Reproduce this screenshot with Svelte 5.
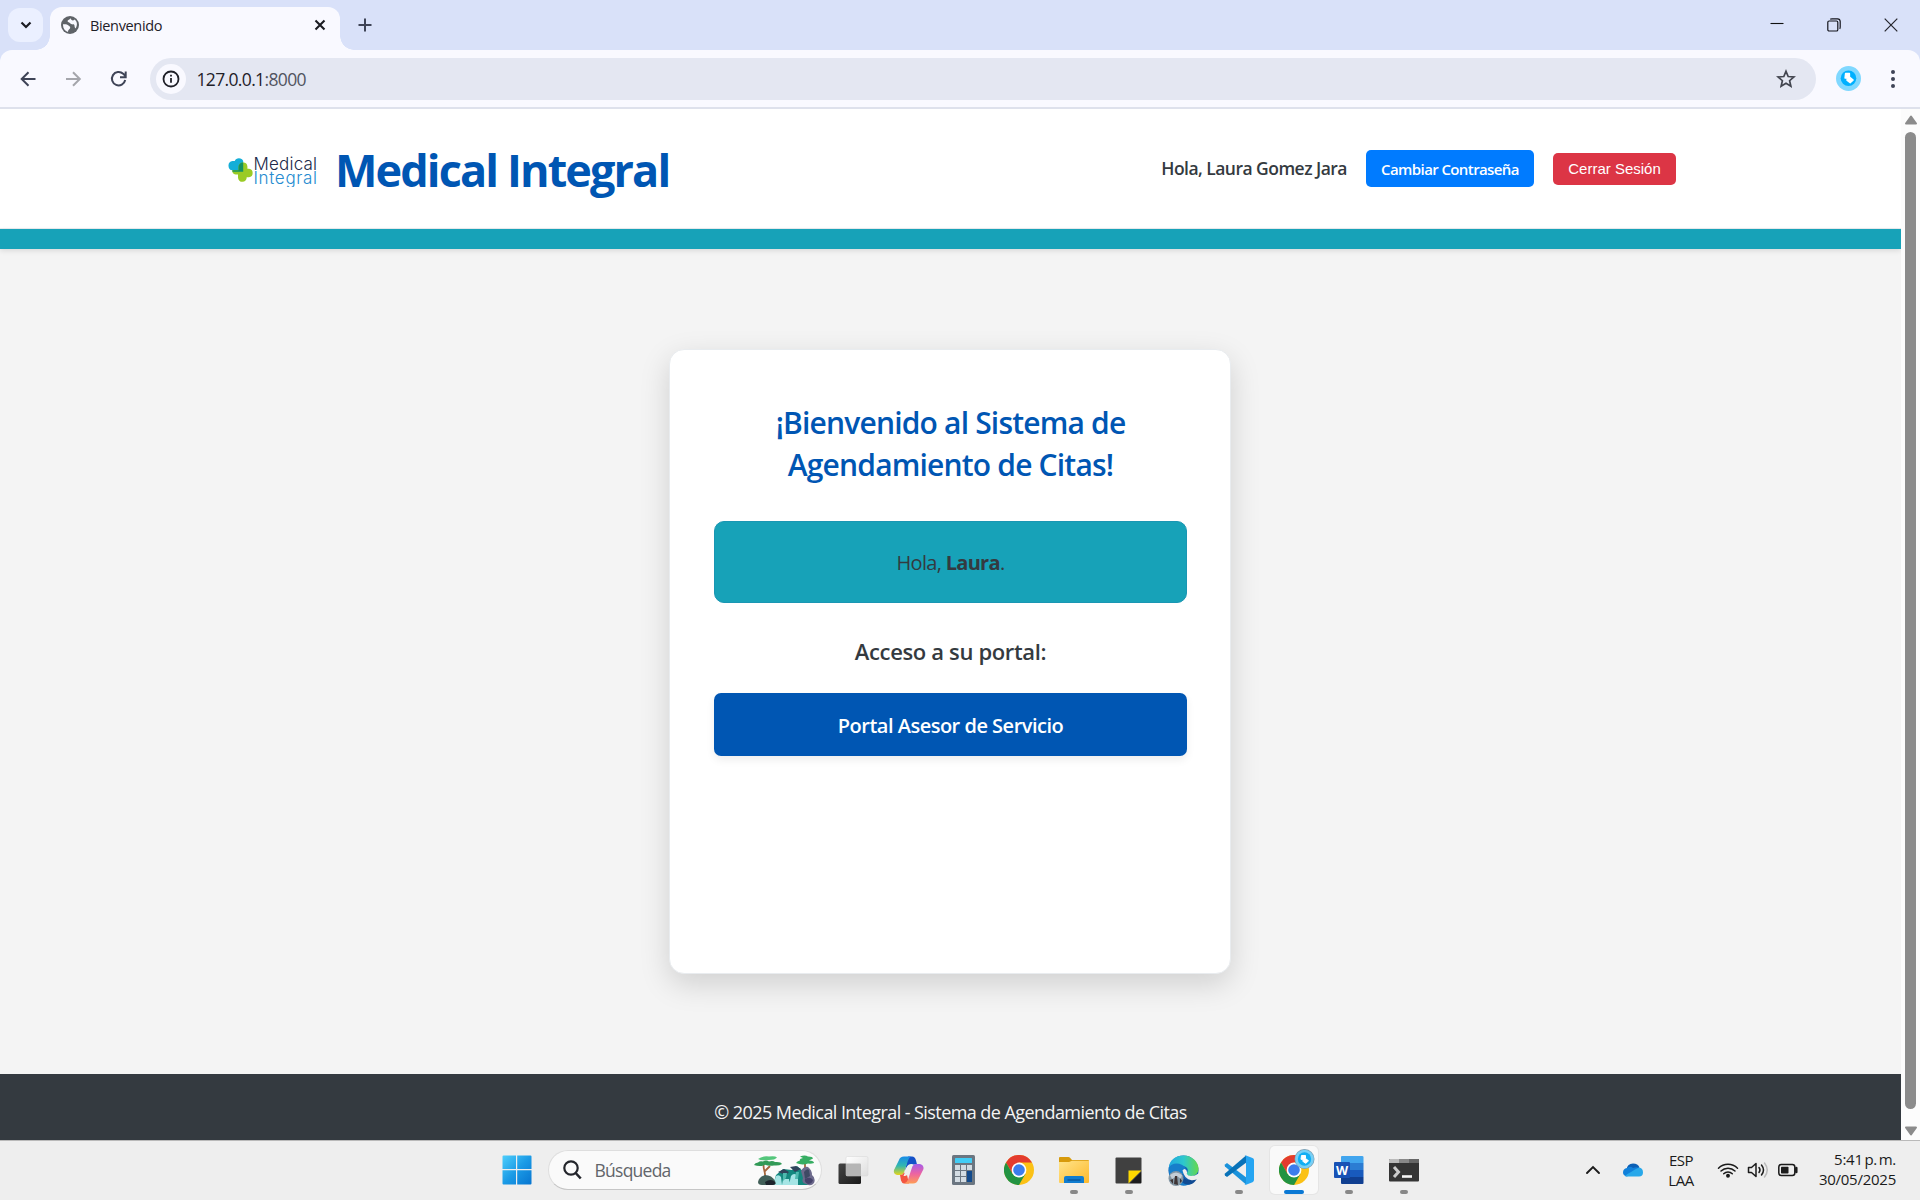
<script>
  const year = 2025;
  const user = { first: 'Laura', full: 'Laura Gomez Jara' };
</script>

{#snippet chrome()}
  <circle cx="15" cy="15" r="15" fill="#fbc116" />
  <path d="M2 7.5A15 15 0 0 1 28 7.5H15L8.5 18.7Z" fill="#e33b2e" />
  <path d="M2 7.5A15 15 0 0 0 15 30L21.5 18.7H8.5Z" fill="#229342" />
  <circle cx="15" cy="15" r="7.4" fill="#fff" />
  <circle cx="15" cy="15" r="5.8" fill="#3b7ded" />
{/snippet}

<div class="screen">
  <div class="tabs">
    <button class="tabsearch" aria-label="Buscar pestañas">
      <svg width="12" height="8" viewBox="0 0 12 8"><path d="M1.500 1.500 6 6l4.500-4.500" fill="none" stroke="#1b1c22" stroke-width="2.200" /></svg>
    </button>
    <div class="tab">
      <svg width="18" height="18" viewBox="0 0 18 18">
        <circle cx="9" cy="9" r="9" fill="#5f6368" />
        <path d="M2 8.200C5 8 6.500 8.500 7.500 9.500 9 10.500 9.500 11 9 12.500 8.500 13.500 7 13.500 7 16 4 15 2 12.500 2 9ZM9.500 2.200C8.500 4 7 3.500 6.500 5 6.500 6.500 8.500 6 9.500 7.500 10.500 9 12 8 13 8.500 14 9.200 13 11 14.500 12.500 17 9 16 5 13.500 3.500 12 5.500 10 4 9.500 2.200Z" fill="#f9f9ff" />
      </svg>
      <span class="tabname">Bienvenido</span>
      <svg width="12" height="12" viewBox="0 0 12 12"><path d="m1.500 1.500 9 9m0-9-9 9" stroke="#1b1c22" stroke-width="2.100" /></svg>
    </div>
    <svg class="plus" width="14" height="14" viewBox="0 0 14 14"><path d="M7 .5v13M.5 7h13" stroke="#3f4457" stroke-width="2" /></svg>
    <div class="winbtns">
      <svg width="14" height="14" viewBox="0 0 14 14"><path d="M.5 5.500h13" stroke="#111" stroke-width="1.100" /></svg>
      <svg width="14" height="14" viewBox="0 0 14 14" fill="none" stroke="#15151c" stroke-width="1.200"><rect x=".8" y="3" width="10" height="10" rx="1.300" /><path d="M3.200 1.200C3.800.8 4 .8 5 .8h5.500a2.800 2.800 0 0 1 2.700 2.700V9c0 1 0 1.200-.5 1.800" /></svg>
      <svg width="14" height="14" viewBox="0 0 14 14"><path d="m.7.7 12.600 12.600m0-12.600L.7 13.300" stroke="#24242c" stroke-width="1.200" /></svg>
    </div>
  </div>

  <div class="toolbar-back">
    <div class="toolbar">
      <svg class="nav" width="44" height="20" viewBox="0 0 44 20"><path d="M29.500 10H16.500M22.500 3.200 15.700 10l6.800 6.800" fill="none" stroke="#3f4457" stroke-width="2" /></svg>
      <svg class="nav" width="44" height="20" viewBox="0 0 44 20"><path d="M15 10h13M22 3.200 28.800 10 22 16.800" fill="none" stroke="#a5a6ac" stroke-width="2" /></svg>
      <svg class="nav" width="44" height="20" viewBox="0 0 44 20"><path d="M29.200 11A6.700 6.700 0 1 1 27.200 4.800L29.500 7M29.700 2.500v5.700h-5.700" fill="none" stroke="#3f4457" stroke-width="2" /></svg>
      <div class="omnibox">
        <span class="info">
          <svg width="18" height="18" viewBox="0 0 18 18"><circle cx="9" cy="9" r="7.500" fill="none" stroke="#1f2028" stroke-width="1.800" /><path d="M9 8v4.800M9 4.800v1.800" stroke="#1f2028" stroke-width="1.800" /></svg>
        </span>
        <span class="url">127.0.0.1<span>:8000</span></span>
        <svg class="star" width="20" height="20" viewBox="0 0 20 20"><path d="m10 2.300 2.200 5.200 5.700.5-4.300 3.700 1.300 5.600-4.900-3-4.900 3 1.300-5.600L2.100 8l5.700-.5Z" fill="none" stroke="#42454f" stroke-width="1.700" /></svg>
      </div>
      <svg class="profile" width="25" height="25" viewBox="0 0 25 25">
        <circle cx="12.500" cy="12.500" r="12.500" fill="#80d8ff" /><circle cx="12.500" cy="12.200" r="7.800" fill="#00b0ff" />
        <path d="M9.500 7.500h4v3.500l3.700 3-3 2.800-3.300-2.600.4-2.200H9Z" fill="#fff" stroke="#fff" stroke-width="1.300" stroke-linejoin="round" />
      </svg>
      <svg class="dots" width="6" height="20" viewBox="0 0 6 20" fill="#3f4457"><circle cx="3" cy="3" r="2" /><circle cx="3" cy="10" r="2" /><circle cx="3" cy="17" r="2" /></svg>
    </div>
  </div>

  <div class="viewport">
    <div class="page">
      <header>
        <div class="brand">
          <svg class="logo" width="90" height="34" viewBox="0 0 90 34">
            <path d="M4.500 17.300A4.700 4.700 0 0 1 4.500 8h2.200A4.600 4.600 0 0 1 15.200 8v9.300Z" fill="#14aed8" />
            <path d="M15 9.500a4.300 4.300 0 0 1 4.400 4v2.300h1.600a4.300 4.300 0 0 1 0 8.500h-2.300a4.300 4.300 0 0 1-8.700.3v-3H7.500a4.300 4.300 0 0 1-3.300-4.500h6.300V14A4.300 4.300 0 0 1 15 9.500Z" fill="#9acb25" />
            <path d="M15.200 9.500v9.300H4.500v-1.500h6V14a4.300 4.300 0 0 1 4.700-4.500Z" fill="#149261" />
            <text x="25.500" y="17" textLength="63.500" fill="#20294a" font-size="17">Medical</text>
            <text x="25.500" y="31.300" textLength="63.500" fill="#258bd0" font-size="17">Integral</text>
          </svg>
          <h1>Medical Integral</h1>
        </div>
        <div class="account">
          <span class="greet">Hola, {user.full}</span>
          <button class="change">Cambiar Contraseña</button>
          <button class="logout">Cerrar Sesión</button>
        </div>
      </header>
      <div class="strip"></div>
      <main>
        <section class="card">
          <h2>¡Bienvenido al Sistema de<br /><span>Agendamiento de Citas!</span></h2>
          <p class="hello">Hola, <b>{user.first}</b>.</p>
          <h3>Acceso a su portal:</h3>
          <button class="portal">Portal Asesor de Servicio</button>
        </section>
      </main>
      <footer>© {year} Medical Integral - Sistema de Agendamiento de Citas</footer>
    </div>
    <div class="scroll">
      <svg width="14" height="10" viewBox="0 0 14 10"><path d="M7 1.500 12 8.500H2Z" fill="#8b8b8b" stroke="#8b8b8b" stroke-width="2" stroke-linejoin="round" /></svg>
      <div class="thumb"></div>
      <svg width="14" height="10" viewBox="0 0 14 10"><path d="M7 8.500 12 1.500H2Z" fill="#8b8b8b" stroke="#8b8b8b" stroke-width="2" stroke-linejoin="round" /></svg>
    </div>
  </div>

  <div class="taskbar">
    <div class="app">
      <svg width="30" height="30" viewBox="0 0 30 30">
        <defs><linearGradient id="win" x1="0" y1="0" x2="30" y2="30" gradientUnits="userSpaceOnUse"><stop stop-color="#50d0fc" /><stop offset=".5" stop-color="#1b9be6" /><stop offset="1" stop-color="#0673cf" /></linearGradient></defs>
        <path d="M1.500.5H14V14H.5V1.500q0-1 1-1ZM15.200.5h13.300q1 0 1 1V14H15.200ZM.5 15.200H14v14.300H1.500q-1 0-1-1ZM15.200 15.200h14.300v13.300q0 1-1 1H15.200Z" fill="url(#win)" />
      </svg>
    </div>
    <div class="search">
      <svg width="19" height="20" viewBox="0 0 19 20" fill="none" stroke="#23252b"><circle cx="8" cy="8" r="6.700" stroke-width="2.200" /><path d="m12.700 13 5 5.500" stroke-width="2.600" /></svg>
      <span>Búsqueda</span>
      <svg class="art" width="61" height="31" viewBox="0 0 61 31">
        <path d="M11 22C12 17 8 13 10 7M10 17l6-6M51 14V6" stroke="#a5663c" stroke-width="1.800" fill="none" />
        <path d="M0 10q1-2.500 4-2.500Q6 5.500 9 6.500q3-2 6 0 4-1 6 .5 6-.5 7 2-3 2-8 1.500-5 1-9-.7-5 2.500-11 .2Z" fill="#329a57" />
        <path d="M4 4q5-3.500 11-2.500 6-1 8 1-2 2.500-8 2.500Q7 6 4 4Z" fill="#54c67b" />
        <path d="M42 8q1-2 4-2.500-1-2 3-2.500l-3-1.500q5-2 8 0 5 0 5 2l-4 2q5 0 5 2.500-3 1-6 .5-6 2-12-.5Z" fill="#36ad62" />
        <path d="M22 20 29 14 38 15 43 11 50 17 54 30H19Z" fill="#14887f" />
        <path d="m24 17 6-3 5 3-3 3Zm12-5 6-1 5 3-6 3Z" fill="#30445b" />
        <path d="M22 21q3-2 5 1l1 8h-9Zm15 0q3-4 7 0v9h-9ZM29 24h6l1 6h-8Z" fill="#a5e5e5" />
        <path d="M29 18h4l-1 5-3 3Zm13-1h3l-1 7h-3Z" fill="#4fb9ae" />
        <path d="M4 27q1-5 7-7 7 0 10 6 2 4-2 4H8q-4 0-4-3Z" fill="#415f58" /><path d="M11 27q6-4 10 0 1 3-3 3h-6Z" fill="#1d252d" />
        <path d="M47 16q3-5 7-4 4 3 4 8 4 3 2 8-3 4-8 1-5-1-3-6Z" fill="#6d6a8c" /><path d="M50 17q3-4 5-2l1 6-5 3Z" fill="#3e4a64" /><path d="M51 24q5-3 8 1-1 4-5 4-4-2-3-5Z" fill="#45426a" />
      </svg>
    </div>

    <div class="apps">
      <div class="app">
        <svg width="31" height="30" viewBox="0 0 31 30">
          <defs><linearGradient id="tv" x2="1" y2="1"><stop stop-color="#444" /><stop offset="1" stop-color="#1a1a1a" /></linearGradient><linearGradient id="tw" x2="1" y2="1"><stop stop-color="#fff" /><stop offset="1" stop-color="#ddd" /></linearGradient></defs>
          <rect x=".5" y="8.500" width="22.500" height="20.500" rx="1.500" fill="url(#tv)" /><rect x="8" y="1.500" width="22" height="19.500" rx="1.500" fill="url(#tw)" stroke="#d5d5d5" stroke-width=".5" /><path d="M8 8.500h14q1 0 1 1V21H8Z" fill="#b5b5b5" />
        </svg>
      </div>
      <div class="app">
        <svg width="31" height="30" viewBox="0 0 31 30">
          <defs><linearGradient id="ca" x1="0" y1="0" x2="0" y2="1"><stop stop-color="#178be9" /><stop offset=".5" stop-color="#31b7b0" /><stop offset="1" stop-color="#e7d51a" /></linearGradient><linearGradient id="cb" x1="0" y1="0" x2="0" y2="1"><stop stop-color="#a65ce9" /><stop offset=".5" stop-color="#ed64a1" /><stop offset="1" stop-color="#ff9c55" /></linearGradient></defs>
          <path d="M15 1.500h4q3 0 4 4l1 4h-6q-4 0-6 6Z" fill="#1450c8" />
          <path d="M6 5q1-3.500 5-3.500h7q-2 1-3 4l-4 12q-1 2.500-4 2.500H4q-4-1-3-5Z" fill="url(#ca)" />
          <path d="M16 28.500h-5q-2 0-3-3L7 20q3 0 4-2.500l3 2.500Z" fill="#f35540" />
          <path d="M25.500 24q-1.500 4.500-5.500 4.500h-9q3-1 4-4l4-12q1-3.500 4-3.500h4q4 1 3.500 5Z" fill="url(#cb)" />
          <path d="M14 12q1-3 4.500-3h1.500q-1 1-1.500 3L16 18q-1 2.500-4 3h-1.500Z" fill="#eee" />
        </svg>
      </div>
      <div class="app">
        <svg width="23" height="30" viewBox="0 0 23 30"><rect width="23" height="30" rx="1.500" fill="#6b7681" /><rect x="3" y="3" width="17" height="5" rx=".5" fill="#42cdf6" /><path d="M3 10h5v5H3Zm6 0h5v5H9Zm6 0h5v5h-5ZM3 16h5v5H3Zm6 0h5v5H9ZM3 22h5v5H3Zm6 0h5v5H9Z" fill="#d3dce3" /><path d="M15 16h5v11h-5Z" fill="#124a8c" /></svg>
      </div>
      <div class="app"><svg width="30" height="30" viewBox="0 0 30 30">{@render chrome()}</svg></div>
      <div class="app run">
        <svg width="30" height="28" viewBox="0 0 30 28">
          <defs><linearGradient id="fo" x2="1" y2="1"><stop stop-color="#ffe48a" /><stop offset="1" stop-color="#fdb92c" /></linearGradient></defs>
          <path d="M0 2q0-1 1-1h8.500q1 0 1.500.7L13 4h16q1 0 1 1v5H0Z" fill="#d79a0b" /><path d="M0 6h10l3-1.200h17V26q0 1-1 1H1q-1 0-1-1Z" fill="url(#fo)" /><path d="M5 22q0-2 2-2h16q2 0 2 2v5H5Z" fill="#117dd0" /><path d="M8.500 24h13" stroke="#08549a" stroke-width="1.300" />
        </svg>
      </div>
      <div class="app run"><svg width="27" height="27" viewBox="0 0 27 27"><path d="M1.500.5h24q1 0 1 1V14L14 26.500H1.500q-1 0-1-1v-24q0-1 1-1Z" fill="#404040" /><path d="M13.500 13.500h13L13.500 26.500Z" fill="#fed900" /><path d="M26.500 14v11.500q0 1-1 1H14Z" fill="#1d1d1d" /></svg></div>
      <div class="app">
        <svg width="31" height="31" viewBox="0 0 31 31">
          <defs><linearGradient id="ed" x2="1"><stop stop-color="#22a8df" /><stop offset=".5" stop-color="#2dc7cd" /><stop offset="1" stop-color="#65d94b" /></linearGradient></defs>
          <circle cx="15.500" cy="15.500" r="15" fill="#1264b5" /><path d="M.8 13C1 5 8 .5 15.500.5 24 .5 30.500 7 30.500 13.500c0 5-3.500 7.500-7.500 7.500-4 0-5-1.500-4-3 2-3 .5-7-5-7C9 9 3 9 .8 13Z" fill="url(#ed)" /><path d="M.8 13C3 7 14 7 17.500 13c1 2-1 3.500-2 5.500-1 4 3 7 7 7q4 0 6-2.500C26 28 21 30.500 16 30.500 8 30.500 0 24 .8 13Z" fill="#177ecb" /><path d="M14.500 19C15 24 21 27 28 23c1 1 .5 2-1.500 4-5 5-13 2-14-3-.5-3 1-5 2-5Z" fill="#104b93" /><path d="M14.500 15.500q2-3 4 0 1 2 .3 3.500 1 2 4.200 2 4 0 7.500-2.500V23q-3 2.500-7 2.200-7-.7-9-9.700Z" fill="#eee" />
          <circle cx="8" cy="23.500" r="7.500" fill="#8396a3" /><path d="M2 20q6-5 12 0l-1 4-4-3-5 3Z" fill="#c3ced7" /><path d="M6 29l1-8h2l1 9ZM2 25l3-1v5Zm10-2 2 3-2 2Z" fill="#3e3434" />
        </svg>
      </div>
      <div class="app run">
        <svg width="30" height="30" viewBox="0 0 30 30"><path d="M1 9.500 3 8l20 15-1 6.500L1 11.500q-.8-1 0-2Z" fill="#1a92db" /><path d="M1 20.500 3 22 23 7l-1-6.500L1 18.500q-.8 1 0 2Z" fill="#0872b8" /><path d="M22 .5 28.500 3q1.500.7 1.500 2v20q0 1.500-1.500 2.200L22 29.800q-1 .2-2-.7 2 .7 2-1.500V2.500Q22 0 20 1q1-.8 2-.5Z" fill="#25a5f2" /></svg>
      </div>
      <div class="app run active">
        <svg width="36" height="36" viewBox="0 0 36 36"><g transform="translate(0 6)">{@render chrome()}</g><circle cx="25.500" cy="10" r="10" fill="#7b9cb0" /><circle cx="25.500" cy="10" r="9.300" fill="#78d0f6" /><circle cx="25.500" cy="10" r="6.700" fill="#12aff4" /><path d="M22.500 6.500h4v3l3 2.300-2.700 2.500-3-2 .4-2h-2.200Z" fill="#fff" stroke="#fff" stroke-linejoin="round" /></svg>
      </div>
      <div class="app run">
        <svg width="30" height="28" viewBox="0 0 30 28"><path d="M8 0h20q1.500 0 1.500 1v6H7V1q0-1 1-1Z" fill="#41a5ee" /><path d="M7 7h22.500v7H7Z" fill="#2b7cd3" /><path d="M7 14h22.500v7H7Z" fill="#185abd" /><path d="M7 21h22.500v6q0 1-1 1H8q-1 0-1-1Z" fill="#103f91" /><rect x="0" y="6" width="16" height="16" rx="1" fill="#1852b5" /><text class="wlet" x="8" y="18.500" text-anchor="middle" fill="#fff" font-size="12.500">W</text></svg>
      </div>
      <div class="app run">
        <svg width="30" height="23" viewBox="0 0 30 23"><rect width="30" height="22.500" rx="1" fill="#353535" /><path d="M1 0h9v4H0V1q0-1 1-1Z" fill="#bbb" /><path d="M10 0h10v4H10Z" fill="#888" /><path d="M20 0h9q1 0 1 1v3H20Z" fill="#666" /><path d="m5 8 4.500 5L5 18" fill="none" stroke="#ccc" stroke-width="3" /><path d="M13 17.500h10" stroke="#f5f5f5" stroke-width="2.600" /></svg>
      </div>
    </div>

    <div class="tray">
      <svg class="cell" width="40" height="20" viewBox="0 0 40 20"><path d="m14 13 6-6 6 6" fill="none" stroke="#1b1b1b" stroke-width="1.900" stroke-linecap="round" /></svg>
      <svg class="cell" width="40" height="20" viewBox="0 0 40 20"><path d="M13.500 10Q14 3.500 20 3.500q5 0 6.500 4L20 11Z" fill="#0b5fb5" /><path d="M14 8q-4 .5-4 4.500 0 3 4 4L27 9q-2-3-7-1-3-2.500-6 0Z" fill="#1180da" /><path d="M12 16q2-2 6-4 4-3 8-4.500 4 .5 4 5 0 4-4 4H14q-1 0-2-.5Z" fill="#28a8ea" /></svg>
      <div class="lang"><span>ESP</span><span>LAA</span></div>
      <svg class="cell" width="30" height="20" viewBox="0 0 30 20" fill="none" stroke="#1b1b1b" stroke-width="1.500"><path d="M5.500 8.200a13.500 13.500 0 0 1 19 0M8 11a10 10 0 0 1 14 0M10.700 13.700a6.200 6.200 0 0 1 8.600 0" stroke-linecap="round" /><circle cx="15" cy="15.700" r="1.200" fill="#1b1b1b" /></svg>
      <svg class="cell" width="30" height="20" viewBox="0 0 30 20" fill="none" stroke="#1b1b1b" stroke-width="1.500" stroke-linecap="round" stroke-linejoin="round"><path d="M5.500 7.500h3l4.500-4v13l-4.500-4h-3ZM16 7.500q2 2.500 0 5M18.500 5q4 5 0 10" /><path d="M21.500 3q5.500 7 0 14" stroke="#bbb" /></svg>
      <svg class="cell" width="30" height="20" viewBox="0 0 30 20"><rect x="5.800" y="4.500" width="16" height="11" rx="2.500" fill="none" stroke="#1b1b1b" stroke-width="1.500" /><rect x="8" y="6.700" width="7.500" height="6.800" rx=".7" fill="#1b1b1b" /><path d="M23.300 8v4" stroke="#1b1b1b" stroke-width="2.500" stroke-linecap="round" /></svg>
      <div class="clock"><span class="time">5:41 p. m.</span><span>30/05/2025</span></div>
    </div>
  </div>
</div>

<style>
  :global(body) { margin: 0; overflow: hidden; }
  .screen { width: 1920px; height: 1200px; display: flex; flex-direction: column; font-family: "Open Sans", "Noto Sans", sans-serif; background: #fff; }
  button { border: 0; padding: 0; font-family: inherit; }
  svg { flex: none; display: block; }
  h1, h2, h3, p { margin: 0; }
  span, h1, h3, button, footer { white-space: nowrap; }

  .tabs { height: 50px; background: #d9e1f9; display: flex; align-items: center; padding: 0 22px 0 8px; box-sizing: border-box; }
  .tabsearch { width: 35px; height: 34px; border-radius: 12px; background: #ebf0ff; display: flex; align-items: center; justify-content: center; }
  .tab { position: relative; align-self: flex-end; width: 290px; height: 43px; box-sizing: border-box; margin-left: 7px; padding: 0 14px 7px 11px; border-radius: 12px 12px 0 0; background: #f9f9ff; display: flex; align-items: center; }
  .tab::before, .tab::after { content: ""; position: absolute; bottom: 0; width: 14px; height: 14px; }
  .tab::before { left: -14px; background: radial-gradient(circle at 0 0, transparent 13.5px, #f9f9ff 14px); }
  .tab::after { right: -14px; background: radial-gradient(circle at 100% 0, transparent 13.5px, #f9f9ff 14px); }
  .tabname { flex: 1; margin-left: 11px; font-size: 14.5px; letter-spacing: -0.35px; color: #1f2028; }
  .plus { margin-left: 18px; }
  .winbtns { margin-left: auto; display: flex; gap: 43px; }

  .toolbar-back { background: #d9e1f9; }
  .toolbar { height: 59px; box-sizing: border-box; border-bottom: 2px solid #dee1ec; background: #f9f9ff; border-radius: 12px 12px 0 0; display: flex; align-items: center; padding: 0 24.500px 0 5.500px; }
  .nav + .nav { margin-left: 1px; }
  .omnibox { flex: 1; height: 42px; margin-left: 10.500px; border-radius: 21px; background: #e4e7f2; display: flex; align-items: center; padding: 0 20px 0 6px; }
  .info { width: 30px; height: 30px; border-radius: 50%; background: #f9f9ff; display: flex; align-items: center; justify-content: center; }
  .url { flex: 1; margin-left: 10.500px; font-size: 17.5px; letter-spacing: -0.65px; color: #1f2028; }
  .url span { color: #51545f; }
  .profile { margin-left: 20px; }
  .dots { margin-left: 29px; }

  .viewport { flex: 1; display: flex; min-height: 0; }
  .page { flex: 1; display: flex; flex-direction: column; background: #f4f4f4; }
  header { height: 119px; border-bottom: 1px solid #e9ecef; background: #fff; display: flex; justify-content: space-between; padding: 0 225px 0 228px; }
  .brand { display: flex; align-items: center; gap: 17px; padding-top: 2px; }
  .logo text { font-family: Inter, sans-serif; font-weight: 300; }
  h1 { font-size: 45px; line-height: 60px; font-weight: 700; letter-spacing: -1.88px; color: #0056b3; }
  .account { display: flex; align-items: center; gap: 19px; }
  .greet { font-size: 17.5px; font-weight: 600; letter-spacing: -0.53px; color: #343a40; padding-bottom: 1px; }
  .change { width: 168px; height: 37px; border-radius: 5px; background: #007bff; color: #fff; font-size: 15px; font-weight: 600; letter-spacing: -0.6px; }
  .logout { width: 123px; height: 32px; border-radius: 5px; background: #dc3545; color: #fff; font-family: "Liberation Sans", Arial, sans-serif; font-size: 15px; }
  .strip { height: 20px; background: #17a2b8; box-shadow: 0 2px 5px rgba(0, 0, 0, .1); }
  main { flex: 1; display: flex; justify-content: center; align-items: flex-start; padding: 100px 1px 0 0; }
  .card { width: 562px; height: 625px; box-sizing: border-box; border: 1px solid #e9ecef; border-radius: 15px; background: #fff; box-shadow: 0 10px 30px rgba(0, 0, 0, .15); padding: 52px 43px 50px 44px; text-align: center; }
  h2 { font-size: 30px; line-height: 42px; font-weight: 600; letter-spacing: -0.82px; color: #0056b3; white-space: nowrap; }
  .hello { height: 82px; margin-top: 35px; box-sizing: border-box; border: 1px solid #1a96b3; border-radius: 10px; background: #17a2b8; line-height: 82px; font-size: 20px; letter-spacing: -0.7px; color: #343a40; }
  h3 { margin-top: 31px; font-size: 22px; line-height: 34px; font-weight: 600; letter-spacing: -0.35px; color: #343a40; }
  .portal { display: block; box-sizing: border-box; width: 100%; height: 63px; margin-top: 25px; padding-top: 2px; border-radius: 7px; background: #0056b3; color: #fff; font-size: 20px; font-weight: 600; letter-spacing: -0.5px; box-shadow: 0 4px 8px rgba(0, 0, 0, .07); }
  footer { height: 66px; line-height: 77px; background: #343a40; text-align: center; color: #f4f4f4; font-size: 18px; letter-spacing: -0.57px; overflow: hidden; }
  .scroll { width: 19px; background: #fcfcfc; display: flex; flex-direction: column; align-items: center; padding: 6px 0 4px; box-sizing: border-box; }
  .thumb { flex: 1; width: 11px; border-radius: 6px; background: #8b8b8b; margin: 7px 0 17px; }

  .taskbar { height: 60px; box-sizing: border-box; border-top: 1px solid #b9b9b9; background: #eee; display: flex; align-items: center; padding: 0 0 1px 489px; }
  .app { position: relative; width: 55px; height: 48px; display: flex; align-items: center; justify-content: center; }
  .apps { display: flex; margin-left: 4.5px; }
  .search { width: 274px; height: 40px; margin-left: 3.500px; box-sizing: border-box; border: 1px solid #dedede; border-bottom-color: #c6c6c6; border-radius: 20px; background: #fafafa; display: flex; align-items: center; padding: 0 6px 0 14px; }
  .search span { flex: 1; margin-left: 13px; font-size: 17.5px; letter-spacing: -0.75px; color: #62656a; }
  .run::after { content: ""; position: absolute; left: 50%; margin-left: -4px; bottom: 0; width: 8px; height: 4px; border-radius: 2px; background: #888; }
  .active { width: 48px; margin: 0 3.500px; background: #f9f9f9; border-radius: 5px; box-shadow: 0 0 0 1px #e5e5e5; }
  .active svg { margin: -6px 0 0 6px; }
  .active::after { width: 20px; margin-left: -10px; background: #0a78d4; }
  .wlet { font-family: "Open Sans", sans-serif; font-weight: 700; }
  .tray { margin-left: auto; padding-right: 24px; display: flex; align-items: center; color: #1b1b1b; font-size: 15px; line-height: 20px; letter-spacing: -0.5px; }
  .lang { width: 56px; margin-right: 4px; padding-bottom: 1px; display: flex; flex-direction: column; align-items: center; }
  .clock { width: 93px; padding-bottom: 2px; letter-spacing: -0.25px; display: flex; flex-direction: column; align-items: flex-end; }
  .time { word-spacing: -2px; }
</style>
